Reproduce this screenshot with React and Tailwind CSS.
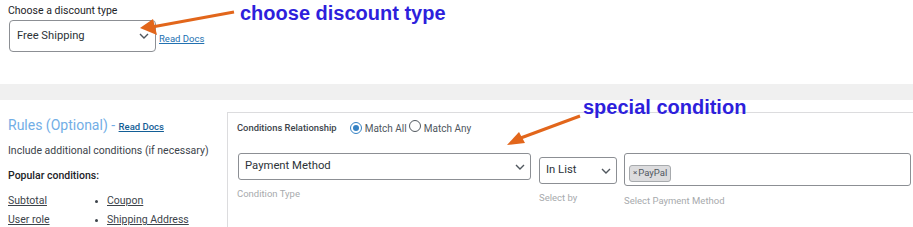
import React from "react";

const Chevron = ({ className }) => (
  <svg className={className} width="10" height="6" viewBox="0 0 10 6" fill="none">
    <path d="M1 1l4 4 4-4" stroke="#50575e" strokeWidth="1.4" />
  </svg>
);

const Radio = ({ checked }) => (
  <span className={"inline-flex items-center justify-center w-[12px] h-[12px] rounded-full border " + (checked ? "border-[#3582c4]" : "border-[#50575e]")}>
    {checked && <span className="w-[6px] h-[6px] rounded-full bg-[#3582c4]" />}
  </span>
);

const App = () => {
  return (
    <div className="relative w-[913px] h-[227px] overflow-hidden bg-white text-[#1d2327]" style={{ fontFamily: "Roboto, 'Noto Sans', sans-serif" }}>
      {/* discount type */}
      <div className="h-[84px] pl-[8px] pt-[4px]">
        <div className="text-[10.5px] leading-[14px] text-[#1d2327]">Choose a discount type</div>
        <div className="flex items-end mt-[2px]">
          <div className="w-[147px] h-[32px] ml-[1px] border border-[#8c8f94] rounded-[4px] flex items-center justify-between pl-[7px] pr-[6px]">
            <span className="text-[11.2px] text-[#2c3338]">Free Shipping</span>
            <Chevron />
          </div>
          <a className="ml-[3px] mb-[7px] text-[9.5px] leading-[12px] text-[#2271b1] underline">Read Docs</a>
        </div>
      </div>

      <div className="h-[16px] bg-[#f0f0f0]" />

      {/* rules */}
      <div className="flex pt-[12px]">
        <div className="w-[227px] shrink-0 pl-[8px]">
          <div className="flex items-baseline mt-[4px]">
            <span className="text-[14px] leading-[18px] text-[#72aee6]">Rules (Optional) -&nbsp;</span>
            <a className="text-[9.5px] font-medium text-[#135e96] underline">Read Docs</a>
          </div>
          <div className="mt-[10px] text-[10.5px] leading-[14px] text-[#3c434a]">Include additional conditions (if necessary)</div>
          <div className="mt-[11px] text-[10.5px] leading-[14px] font-medium text-[#1d2327]">Popular conditions:</div>
          <div className="mt-[11px] grid grid-cols-[87px_1fr] gap-y-[5px] text-[10.5px] leading-[14px] text-[#3c434a]">
            <a className="underline">Subtotal</a>
            <div className="flex items-center"><span className="w-[3px] h-[3px] rounded-full bg-[#3c434a] mr-[9px]" /><a className="underline">Coupon</a></div>
            <a className="underline">User role</a>
            <div className="flex items-center"><span className="w-[3px] h-[3px] rounded-full bg-[#3c434a] mr-[9px]" /><a className="underline">Shipping Address</a></div>
          </div>
        </div>

        <div className="flex-1 border-t border-l border-[#dcdcde] pl-[9px] pt-[8px] h-[115px]">
          <div className="flex items-center h-[14px] text-[10px]">
            <span className="text-[9.4px] font-medium text-[#3c434a] mr-[13px]">Conditions Relationship</span>
            <Radio checked />
            <span className="ml-[3px] text-[#50575e]">Match All</span>
            <span className="ml-[2px]"><Radio /></span>
            <span className="ml-[3px] text-[#50575e]">Match Any</span>
          </div>
          <div className="flex items-start mt-[18px]">
            <div>
              <div className="w-[293px] h-[27px] ml-[1px] border border-[#8c8f94] rounded-[3px] flex items-center justify-between pl-[6px] pr-[5px]">
                <span className="text-[11.3px] text-[#2c3338]">Payment Method</span>
                <Chevron />
              </div>
              <div className="mt-[7px] text-[9.5px] text-[#a7aaad]">Condition Type</div>
            </div>
            <div className="ml-[8px] mt-[4px]">
              <div className="w-[78px] h-[27px] border border-[#8c8f94] rounded-[3px] flex items-center justify-between pl-[6px] pr-[5px]">
                <span className="text-[11.3px] text-[#2c3338]">In List</span>
                <Chevron />
              </div>
              <div className="mt-[7px] text-[9.5px] text-[#a7aaad]">Select by</div>
            </div>
            <div className="ml-[7px]">
              <div className="w-[287px] h-[33px] border border-[#8c8f94] rounded-[3px] pl-[4px] pt-[4px]">
                <span className="inline-flex items-center h-[17px] px-[3px] rounded-[3px] border border-[#a7aaad] bg-[#dcdcde] text-[9.5px] text-[#50575e]">
                  <span className="text-[8px] mr-[1px]">×</span>PayPal
                </span>
              </div>
              <div className="mt-[8px] text-[9.5px] text-[#a7aaad]">Select Payment Method</div>
            </div>
          </div>
        </div>
      </div>

      {/* annotations */}
      <div className="absolute left-[240px] top-[1px] text-[20px] font-bold leading-[24px] text-[#2e1fdc]" style={{ fontFamily: "'Liberation Sans', Arial, sans-serif" }}>
        choose discount type
      </div>
      <div className="absolute left-[583px] top-[95px] text-[20px] font-bold leading-[24px] text-[#2e1fdc]" style={{ fontFamily: "'Liberation Sans', Arial, sans-serif" }}>
        special condition
      </div>
      <svg className="absolute left-0 top-0 pointer-events-none" width="913" height="227">
        <line x1="234" y1="12" x2="152" y2="27" stroke="#e2661b" strokeWidth="3" />
        <polygon points="140,28 153,19 157,35" fill="#e2661b" />
        <line x1="580" y1="116" x2="518" y2="139" stroke="#e2661b" strokeWidth="3" />
        <polygon points="507,145 519,132 525,143" fill="#e2661b" />
      </svg>
    </div>
  );
};

export default App;
